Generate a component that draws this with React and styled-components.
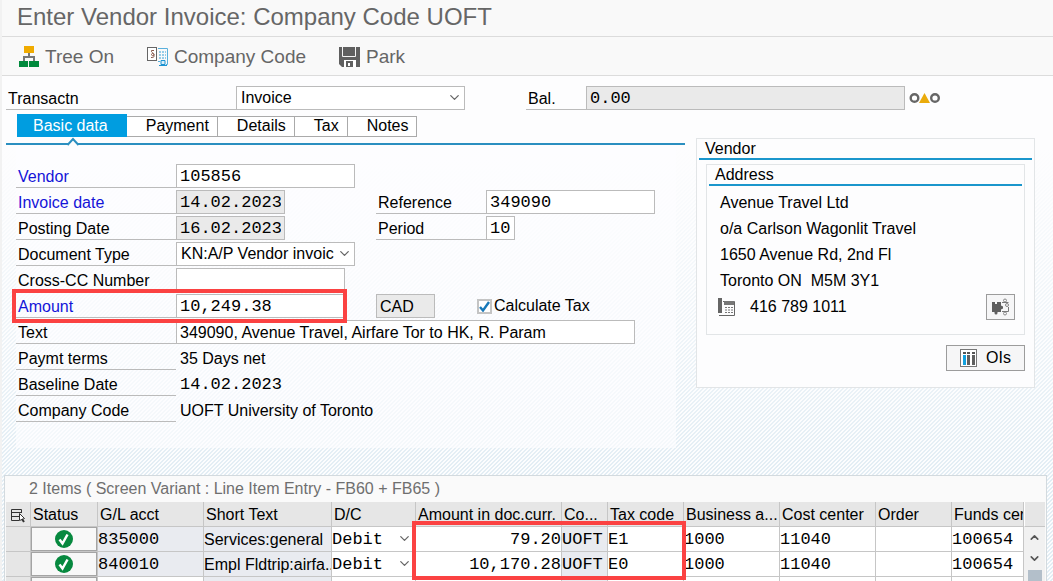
import React, { useState } from 'react';
import styled, { createGlobalStyle, css } from 'styled-components';
import { ChevronDown, ChevronUp } from 'lucide-react';

const sans = "'Liberation Sans', Arial, sans-serif";
const mono = "'Liberation Mono', 'Courier New', monospace";

const GlobalStyle = createGlobalStyle`
  * {
    box-sizing: border-box;
  }
  body {
    margin: 0;
    background: #fdfdfe;
    color: #000;
    font-family: ${sans};
    font-size: 16px;
  }
  button, input, select {
    margin: 0;
    color: inherit;
    font-family: inherit;
    font-size: inherit;
  }
`;

const Page = styled.div`
  display: flex;
  flex-direction: column;
  height: 100vh;
  overflow: hidden;
  border-left: 2px solid #f2f2f2;
`;

const TitleBar = styled.header`
  height: 37px;
  padding-left: 15px;
  border-bottom: 1px solid #dcdcdc;
  background: #f9f9f9;
`;

const Title = styled.h1`
  margin: 0;
  color: #666;
  font-size: 24px;
  font-weight: 400;
  line-height: 34px;
  white-space: nowrap;
`;

const Toolbar = styled.nav`
  display: flex;
  align-items: center;
  gap: 33px;
  height: 39px;
  padding-left: 16px;
  border-bottom: 1px solid #dcdcdc;
  background: #f9f9f9;
`;

const ToolButton = styled.button`
  display: flex;
  align-items: center;
  gap: 5px;
  padding: 1px 0 0;
  border: none;
  background: none;
  color: #666;
  font-size: 19px;
  line-height: 26px;
`;

const Body = styled.main`
  display: flex;
  flex: 1;
  flex-direction: column;
  min-height: 0;
  padding: 10px 6px 0 2px;
  background:
    linear-gradient(#fdfdfe 14%, rgba(253, 253, 254, 0.5) 50%, rgba(253, 253, 254, 0) 80%),
    linear-gradient(135deg, #e2edf4 25%, #fcfdfe 25%, #fcfdfe 50%, #e2edf4 50%, #e2edf4 75%, #fcfdfe 75%);
  background-size: 100% 100%, 4px 4px;
`;

const HeaderRow = styled.div`
  display: flex;
  align-items: center;
  padding-left: 2px;
`;

const Label = styled.label`
  flex: none;
  width: ${({ $width }) => ($width ? `${$width}px` : 'auto')};
  height: 24px;
  padding-left: 2px;
  border-bottom: 1px solid #bbb;
  color: ${({ $required }) => ($required ? '#1414d8' : '#000')};
  line-height: 26px;
  white-space: nowrap;
`;

const PlainLabel = styled(Label).attrs({ as: 'span' })``;

const boxed = css`
  width: ${({ $width }) => ($width ? `${$width}px` : '100%')};
  height: 24px;
  border: 1px solid #bbb;
  border-radius: 0;
  outline: none;
  font-family: ${({ $mono }) => ($mono ? mono : sans)};
  font-size: ${({ $mono }) => ($mono ? 17 : 16)}px;
`;

const Input = styled.input`
  ${boxed}
  display: block;
  padding: ${({ $mono }) => ($mono ? 0 : 2)}px 3px 0;
  background: ${({ readOnly }) => (readOnly ? '#eaeaea' : '#fff')};
`;

const SelectBox = styled.div`
  position: relative;
  flex: none;
  width: ${({ $width }) => ($width ? `${$width}px` : '100%')};

  svg {
    position: absolute;
    top: 4px;
    right: 3px;
    color: #666;
    pointer-events: none;
  }
`;

const Select = styled.select`
  ${boxed}
  width: 100%;
  display: block;
  padding: 0 20px 0 4px;
  appearance: none;
  background: #fff;
  line-height: 22px;
`;

const Signals = styled.svg`
  margin-left: 4px;
`;

const Spacer = styled.div`
  width: 61px;
`;

const Columns = styled.div`
  display: grid;
  grid-template-columns: minmax(0, 1fr) 339px;
  gap: 11px;
  padding: 0 12px 27px 2px;
`;

const Tabs = styled.div`
  display: flex;
  height: 29px;
  padding: 4px 0 0 11px;
`;

const Tab = styled.button`
  height: 21px;
  margin-top: 2px;
  padding: 0 8px 2px 19px;
  border: solid #aaa;
  border-width: 1px 1px 1px 0;
  background: #fff;
  line-height: 17px;
`;

const ActiveTab = styled(Tab)`
  position: relative;
  height: 23px;
  margin-top: 0;
  padding: 0 19px 0 16px;
  border: none;
  background: #009de0;
  color: #fff;
  line-height: 23px;

  svg {
    position: absolute;
    top: 23px;
    left: 50px;
  }
`;

const TabLine = styled.div`
  height: 2px;
  margin-top: 4px;
  background: #2b8fc0;
`;

const Form = styled.form`
  display: flex;
  flex-direction: column;
  gap: 2px;
  margin: 0 9px 0 10px;
  padding: 19px 0 26px;
  background: rgba(253, 253, 255, 0.6);
`;

const Row = styled.div`
  display: grid;
  position: relative;
  grid-template-columns: 160px 200px 110px 1fr;
  height: 24px;
`;

const Wide = styled.div`
  grid-column: ${({ $from }) => $from} / -1;
  display: flex;
  height: 24px;
`;

const Value = styled.output`
  padding-left: 4px;
  font-family: ${({ $mono }) => ($mono ? mono : sans)};
  font-size: ${({ $mono }) => ($mono ? 17 : 16)}px;
  line-height: 26px;
  white-space: nowrap;
`;

const CheckLabel = styled.label`
  display: flex;
  align-items: center;
  gap: 2px;
  margin-left: 42px;
  line-height: 26px;
`;

const Check = styled.input`
  width: 15px;
  height: 15px;
  appearance: none;
  border: 2px solid #c4c4c4;
  background: #fff;

  &:checked {
    background: #fff
      url("data:image/svg+xml,%3Csvg xmlns='http://www.w3.org/2000/svg' viewBox='0 0 11 11'%3E%3Cpath d='M1 6l3 3.5L10 1' fill='none' stroke='%231878b8' stroke-width='2.4'/%3E%3C/svg%3E");
  }
`;

// red frame drawn over the fields that the user has to look at
const frame = css`
  position: absolute;
  z-index: 1;
  border: 4px solid #fb4242;
  pointer-events: none;
`;

const RowFrame = styled.span`
  ${frame}
  top: -5px;
  left: -4px;
  width: 335px;
  height: 34px;
`;

const TableFrame = styled.span`
  ${frame}
  top: 19px;
  left: 407px;
  width: 274px;
  height: 59px;
`;

const Card = styled.section`
  margin-top: 28px;
  padding: 0 2px 16px;
  border: 1px solid #e2e5e7;
  background: #fdfdfe;
`;

const CardTitle = styled.h2`
  margin: 0;
  height: 21px;
  padding-left: 6px;
  border-bottom: 2px solid #1b96cc;
  font-size: 16px;
  font-weight: 400;
  line-height: 20px;
`;

const AddressCard = styled(Card)`
  margin: 4px 7px 10px;
  padding-bottom: 14px;
`;

const AddressLines = styled.address`
  padding: 4px 7px 0 11px;
  font-style: normal;
  line-height: 26px;
  white-space: pre;
`;

const PhoneRow = styled.div`
  display: flex;
  align-items: center;
  gap: 13px;
  margin-left: -2px;
  height: 26px;
`;

const Button = styled.button`
  display: flex;
  align-items: center;
  justify-content: center;
  gap: 8px;
  width: ${({ $width }) => $width}px;
  height: 26px;
  margin-left: auto;
  padding: 0;
  border: 1px solid #9c9c9c;
  background: #f6f6f7;
  line-height: 26px;
`;

const CardFooter = styled.div`
  padding-right: 7px;
`;

const Items = styled.section`
  flex: 1;
  min-height: 0;
  overflow: hidden;
  border: 1px solid #d3dade;
  border-bottom: none;
  background: #fafafa;
`;

const ItemsTitle = styled.h2`
  margin: 0;
  height: 26px;
  padding-left: 24px;
  color: #6f6f6f;
  font-size: 16px;
  font-weight: 400;
  line-height: 25px;
`;

const TableArea = styled.div`
  position: relative;
  display: flex;
  padding: 0 1px;
`;

const Table = styled.table`
  flex: 1;
  width: 0;
  table-layout: fixed;
  border-collapse: separate;
  border-spacing: 0;
`;

const Th = styled.th`
  height: 25px;
  padding: 2px 0 0 2px;
  border: solid #c6c6c6;
  border-width: 0 1px 1px 0;
  background: #e6e6e6;
  font-weight: 400;
  line-height: 22px;
  text-align: left;
  white-space: nowrap;
  overflow: hidden;
  text-overflow: clip;

  svg {
    display: block;
    margin-left: 2px;
  }
`;

const Td = styled.td`
  height: 25px;
  padding: ${({ $flush }) => ($flush ? 0 : 2)}px 0 0;
  border: solid #c6c6c6;
  border-width: 0 1px 1px 0;
  background: ${({ $locked }) => ($locked ? '#e9ebf0' : '#fff')};
  font-family: ${({ $sans }) => ($sans ? sans : mono)};
  font-size: ${({ $sans }) => ($sans ? 16 : 17)}px;
  line-height: 22px;
  text-align: ${({ $right }) => ($right ? 'right' : 'left')};
  white-space: nowrap;
  overflow: hidden;
  text-overflow: clip;
`;

const RowHead = styled(Td)`
  background: #e6e6e6;
`;

const StatusButton = styled.button`
  display: flex;
  align-items: center;
  justify-content: center;
  width: 100%;
  height: 24px;
  padding: 0;
  border: 1px solid #a4a4a4;
  background: #f8f8f8;
`;

const CellSelect = styled(Select)`
  padding: 1px 20px 0 0;
  border: none;
`;

const ScrollBar = styled.div`
  display: flex;
  flex-direction: column;
  align-items: center;
  width: 21px;
  background: #f1f1f1;
`;

const ScrollCorner = styled.div`
  width: 100%;
  height: 25px;
  border-bottom: 1px solid #c6c6c6;
  border-left: 1px solid #fff;
  background: #e6e6e6;
`;

const ScrollButton = styled.button`
  display: flex;
  align-items: center;
  justify-content: center;
  width: 20px;
  height: 21px;
  padding: 0;
  border: none;
  background: none;
  color: #555;
`;

const ScrollThumb = styled.div`
  width: 14px;
  height: 30px;
  margin-top: 1px;
  background: #b3bfca;
`;

const TreeIcon = () => (
  <svg width="22" height="22" viewBox="0 0 22 22">
    <path d="M11 7v4M6 15v-4h10v4" fill="none" stroke="#777" strokeWidth="2" />
    <rect x="6" y="0" width="10" height="7" fill="#f0ab00" />
    <rect x="1" y="15" width="9" height="6" fill="#008a3c" />
    <rect x="11" y="15" width="10" height="6" fill="#008a3c" />
    <path d="M10.500 15v6" stroke="#f4f4f4" />
  </svg>
);

const CompanyIcon = () => (
  <svg width="22" height="22" viewBox="0 0 22 22">
    <rect x="0.5" y="1.5" width="9" height="13" fill="#fff" stroke="#666" />
    <path d="M7 4.500H4.500c-1 2 2.500 2 2.500 4s-2.500 1.500-2.500 0 2.500-1.500 2.500 1-1 2-3 2" fill="none" stroke="#8a5a4c" />
    <path d="M11 2.500h9.500v16H19M13 15.500h-2" fill="none" stroke="#5ab0dc" />
    <path d="M12 6h7M12 9h7M12 12h7" stroke="#35a0d8" strokeDasharray="2 1" />
    <path d="M14 14.500h4v4h-4zM12 19.500h8" fill="#d9effa" stroke="#1c93d2" />
  </svg>
);

const SaveIcon = () => (
  <svg width="22" height="22" viewBox="0 0 22 22">
    <path d="M0 1h21v20H3l-3-3z" fill="#5f5f5f" />
    <path d="M3.500 1v9.500h13V1" fill="none" stroke="#f4f4f4" />
    <path d="M5 14h12v7H5z" fill="#fff" />
    <path d="M7 15h7v6H7z" fill="#5f5f5f" />
    <path d="M9 17h2v3H9z" fill="#fff" />
  </svg>
);

const PhoneIcon = () => (
  <svg width="19" height="19" viewBox="0 0 19 19">
    <path d="M0 0h4v15H0z" fill="#666" />
    <path d="M5 3.500h11.500v14H1" fill="none" stroke="#666" />
    <path d="M6 3h10v4H6z" fill="#777" />
    <path d="M7 9.500h8M7 12h8M7 14.500h8" stroke="#777" strokeDasharray="2 1" />
  </svg>
);

const PuzzleIcon = () => (
  <svg width="19" height="19" viewBox="0 0 19 19">
    <path d="M1 4h3v2h2V4h4v3.500l2 1v2l-2 1V14H6.500v1a1.500 1.500 0 1 1-3 0v-1H1z" fill="#5f5f5f" />
    <circle cx="14" cy="2.500" r="1.500" fill="none" stroke="#888" />
    <circle cx="16" cy="7" r="1.500" fill="none" stroke="#888" />
    <circle cx="14" cy="15.500" r="1.500" fill="none" stroke="#888" />
    <path d="M11 4.500h6.500M17.500 9v4.500H11" fill="none" stroke="#777" />
  </svg>
);

const ColumnsIcon = () => (
  <svg width="18" height="18" viewBox="0 0 18 18">
    <rect x="0.5" y="0.5" width="16" height="17" fill="#fff" stroke="#777" />
    <path d="M3 3h3v2H3zM7 3h3v2H7zM12 3h3v2h-3z" fill="#555" />
    <path d="M3 6h3v10H3z" fill="#12a0de" />
    <path d="M7 6h3v10H7zM12 6h3v10h-3z" fill="#5f5f5f" />
  </svg>
);

const ChooseIcon = () => (
  <svg width="16" height="15" viewBox="0 0 16 15" fill="none" stroke="#333">
    <path d="M11.500 5V1.500H1.500v11H9M1.500 4.500h10M1.500 8.500H9" />
    <path d="M9.500 5.500v7l5-2z" fill="#fff" />
    <path d="M12 11l2 3" strokeWidth="2" />
  </svg>
);

const OkIcon = () => (
  <svg width="18" height="18" viewBox="0 0 18 18">
    <circle cx="9" cy="9" r="9" fill="#07893f" />
    <path d="M4.500 9.500l3 4L12.500 4.500" fill="none" stroke="#fff" strokeWidth="2.5" />
  </svg>
);

const columns = [
  { name: 'G/L acct', width: 106 },
  { name: 'Short Text', width: 128 },
  { name: 'D/C', width: 84 },
  { name: 'Amount in doc.curr.', width: 146 },
  { name: 'Co...', width: 46 },
  { name: 'Tax code', width: 76 },
  { name: 'Business a...', width: 96 },
  { name: 'Cost center', width: 96 },
  { name: 'Order', width: 76 },
];

const items = [
  { account: '835000', text: 'Services:general', amount: '79.20', tax: 'E1' },
  { account: '840010', text: 'Empl Fldtrip:airfa..', amount: '10,170.28', tax: 'E0' },
];

function ItemRow({ item }) {
  return (
    <tr>
      <RowHead />
      <Td $locked $flush>
        <StatusButton type="button" aria-label="Status OK">
          <OkIcon />
        </StatusButton>
      </Td>
      <Td $locked>{item.account}</Td>
      <Td $locked $sans>{item.text}</Td>
      <Td $flush>
        <SelectBox>
          <CellSelect $mono aria-label="D/C">
            <option>Debit</option>
          </CellSelect>
          <ChevronDown size={15} strokeWidth={2} />
        </SelectBox>
      </Td>
      <Td $right>{item.amount}</Td>
      <Td $locked>UOFT</Td>
      <Td>{item.tax}</Td>
      <Td>1000</Td>
      <Td>11040</Td>
      <Td />
      <Td>100654</Td>
    </tr>
  );
}

export default function App() {
  const [calculateTax, setCalculateTax] = useState(true);

  return (
    <Page>
      <GlobalStyle />
      <TitleBar>
        <Title>Enter Vendor Invoice: Company Code UOFT</Title>
      </TitleBar>
      <Toolbar>
        <ToolButton type="button">
          <TreeIcon />
          Tree On
        </ToolButton>
        <ToolButton type="button">
          <CompanyIcon />
          Company Code
        </ToolButton>
        <ToolButton type="button">
          <SaveIcon />
          Park
        </ToolButton>
      </Toolbar>

      <Body>
        <HeaderRow>
          <Label htmlFor="transaction" $width={230}>Transactn</Label>
          <SelectBox $width={229}>
            <Select id="transaction">
              <option>Invoice</option>
            </Select>
            <ChevronDown size={15} strokeWidth={2} />
          </SelectBox>
          <Spacer />
          <Label htmlFor="balance" $width={60}>Bal.</Label>
          <Input id="balance" $mono $width={319} readOnly value="0.00" />
          <Signals width="32" height="12" viewBox="0 0 32 12">
            <circle cx="5.500" cy="6" r="3.800" fill="#fff" stroke="#666" strokeWidth="2.400" />
            <path d="M10 11h11L15.500 1z" fill="#eaab0c" />
            <circle cx="26" cy="6" r="3.800" fill="#fff" stroke="#666" strokeWidth="2.400" />
          </Signals>
        </HeaderRow>

        <Columns>
          <div>
            <Tabs>
              <ActiveTab type="button">
                Basic data
                <svg width="12" height="9" viewBox="0 0 12 9">
                  <path d="M0 8h1l5-6 5 6h1v1H0z" fill="#fdfdfe" />
                  <path d="M0.500 8L6 2l5.500 6" fill="none" stroke="#2b8fc0" strokeWidth="2" />
                </svg>
              </ActiveTab>
              <Tab type="button">Payment</Tab>
              <Tab type="button">Details</Tab>
              <Tab type="button">Tax</Tab>
              <Tab type="button">Notes</Tab>
            </Tabs>
            <TabLine />
            <Form>
              <Row>
                <Label htmlFor="vendor" $required>Vendor</Label>
                <Input id="vendor" $mono $width={179} defaultValue="105856" />
              </Row>
              <Row>
                <Label htmlFor="invoiceDate" $required>Invoice date</Label>
                <Input id="invoiceDate" $mono $width={109} readOnly value="14.02.2023" />
                <Label htmlFor="reference">Reference</Label>
                <Input id="reference" $mono $width={169} defaultValue="349090" />
              </Row>
              <Row>
                <Label htmlFor="postingDate">Posting Date</Label>
                <Input id="postingDate" $mono $width={109} readOnly value="16.02.2023" />
                <Label htmlFor="period">Period</Label>
                <Input id="period" $mono $width={29} defaultValue="10" />
              </Row>
              <Row>
                <Label htmlFor="documentType">Document Type</Label>
                <SelectBox $width={179}>
                  <Select id="documentType">
                    <option>KN:A/P Vendor invoic</option>
                  </Select>
                  <ChevronDown size={15} strokeWidth={2} />
                </SelectBox>
              </Row>
              <Row>
                <Label htmlFor="crossNumber">Cross-CC Number</Label>
                <Input id="crossNumber" $mono $width={169} />
              </Row>
              <Row>
                <Label htmlFor="amount" $required>Amount</Label>
                <Input id="amount" $mono $width={169} defaultValue="10,249.38" />
                <Wide $from={3}>
                  <Input aria-label="Currency" $width={59} readOnly value="CAD" />
                  <CheckLabel>
                    <Check
                      type="checkbox"
                      checked={calculateTax}
                      onChange={(e) => setCalculateTax(e.target.checked)}
                    />
                    Calculate Tax
                  </CheckLabel>
                </Wide>
                <RowFrame />
              </Row>
              <Row>
                <Label htmlFor="text">Text</Label>
                <Wide $from={2}>
                  <Input
                    id="text"
                    $width={459}
                    defaultValue="349090, Avenue Travel, Airfare Tor to HK, R. Param"
                  />
                </Wide>
              </Row>
              <Row>
                <PlainLabel>Paymt terms</PlainLabel>
                <Value>35 Days net</Value>
              </Row>
              <Row>
                <PlainLabel>Baseline Date</PlainLabel>
                <Value $mono>14.02.2023</Value>
              </Row>
              <Row>
                <PlainLabel>Company Code</PlainLabel>
                <Value>UOFT University of Toronto</Value>
              </Row>
            </Form>
          </div>

          <div>
            <Card>
              <CardTitle>Vendor</CardTitle>
              <AddressCard>
                <CardTitle as="h3">Address</CardTitle>
                <AddressLines>
                  <div>Avenue Travel Ltd</div>
                  <div>o/a Carlson Wagonlit Travel</div>
                  <div>1650 Avenue Rd, 2nd Fl</div>
                  <div>{'Toronto ON  M5M 3Y1'}</div>
                  <PhoneRow>
                    <PhoneIcon />
                    416 789 1011
                    <Button type="button" $width={29} aria-label="Bank details">
                      <PuzzleIcon />
                    </Button>
                  </PhoneRow>
                </AddressLines>
              </AddressCard>
              <CardFooter>
                <Button type="button" $width={79}>
                  <ColumnsIcon />
                  OIs
                </Button>
              </CardFooter>
            </Card>
          </div>
        </Columns>

        <Items>
          <ItemsTitle>2 Items ( Screen Variant : Line Item Entry - FB60 + FB65 )</ItemsTitle>
          <TableArea>
            <Table>
              <colgroup>
                <col width="25" />
                <col width="67" />
                {columns.map((c) => (
                  <col key={c.name} width={c.width} />
                ))}
                <col />
              </colgroup>
              <thead>
                <tr>
                  <Th>
                    <ChooseIcon />
                  </Th>
                  <Th>Status</Th>
                  {columns.map((c) => (
                    <Th key={c.name}>{c.name}</Th>
                  ))}
                  <Th>Funds cer</Th>
                </tr>
              </thead>
              <tbody>
                {items.map((item) => (
                  <ItemRow key={item.account} item={item} />
                ))}
                <tr>
                  <RowHead />
                  <Td $locked $flush>
                    <StatusButton type="button" aria-label="Status" />
                  </Td>
                  <Td />
                  <Td $locked />
                  <Td />
                  <Td />
                  <Td $locked />
                  <Td />
                  <Td />
                  <Td />
                  <Td />
                  <Td />
                </tr>
              </tbody>
            </Table>
            <ScrollBar>
              <ScrollCorner />
              <ScrollButton type="button" aria-label="Scroll up">
                <ChevronUp size={13} strokeWidth={3} />
              </ScrollButton>
              <ScrollButton type="button" aria-label="Scroll down">
                <ChevronDown size={13} strokeWidth={3} />
              </ScrollButton>
              <ScrollThumb />
            </ScrollBar>
            <TableFrame />
          </TableArea>
        </Items>
      </Body>
    </Page>
  );
}
